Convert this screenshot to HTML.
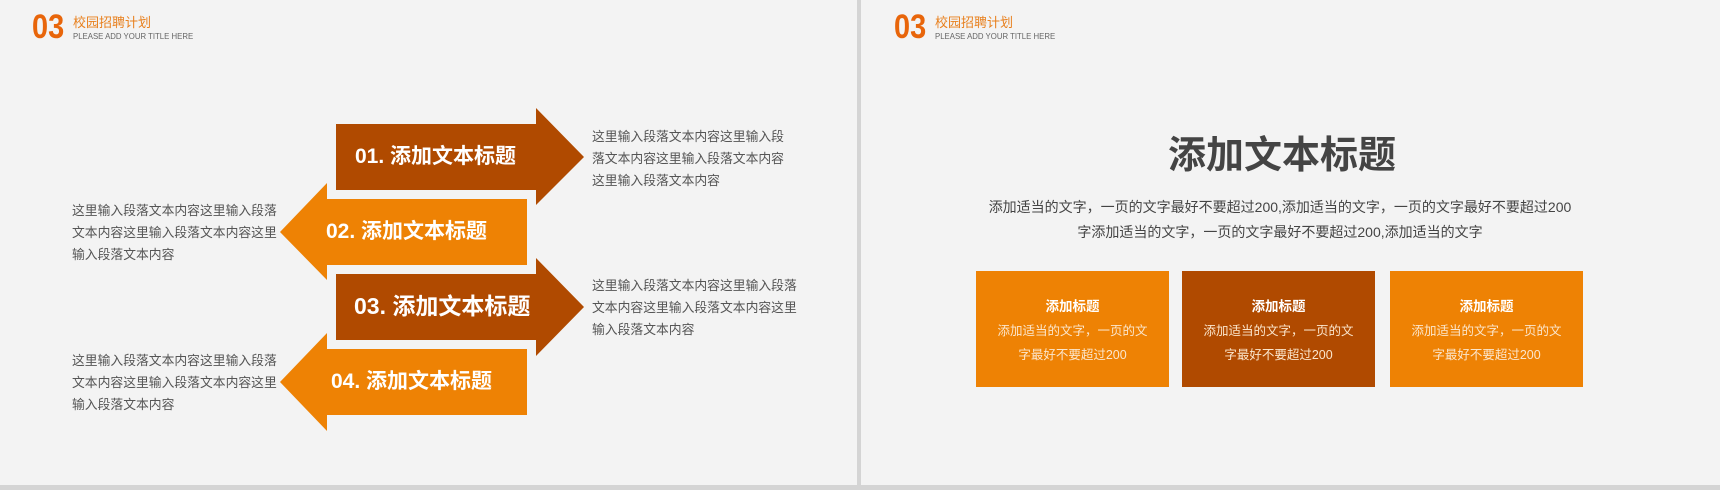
<!DOCTYPE html>
<html><head><meta charset="utf-8"><style>
*{margin:0;padding:0}
body{width:1720px;height:490px;background:#f3f3f3;position:relative;overflow:hidden;font-family:"Liberation Sans","Noto Sans CJK SC",sans-serif}
.a{position:absolute;white-space:nowrap}
.num{font-family:"Liberation Sans Narrow","Liberation Sans",sans-serif;font-weight:bold;color:#e8650a;font-size:34px;line-height:26px;transform:scaleX(0.85);transform-origin:left top}
.tt{color:#e8801e;font-size:13px;line-height:14px}
.st{color:#666;font-size:7.8px;line-height:8px}
.p{color:#555;font-size:12.8px;line-height:22px}
.at{color:#fff;font-weight:bold;font-size:21px;line-height:24px}
.box{position:absolute;top:271px;width:193px;height:116px;text-align:center;color:#fbe6cc;font-size:12.5px;line-height:24px}
.box b{display:block;color:#fff;font-size:13.5px;margin-top:24px}
</style></head><body>
<div class="a num" style="left:32px;top:14px">03</div>
<div class="a tt" style="left:73px;top:16px">校园招聘计划</div>
<div class="a st" style="left:73px;top:33px">PLEASE ADD YOUR TITLE HERE</div>
<div class="a num" style="left:894px;top:14px">03</div>
<div class="a tt" style="left:935px;top:16px">校园招聘计划</div>
<div class="a st" style="left:935px;top:33px">PLEASE ADD YOUR TITLE HERE</div>
<div class="a" style="left:857px;top:0;width:4px;height:490px;background:#d4d4d4"></div>
<div class="a" style="left:0;top:485px;width:1720px;height:5px;background:#d4d4d4"></div>
<svg class="a" style="left:0;top:0" width="860" height="490">
<polygon points="336,124 536,124 536,108 584,157 536,205 536,190 336,190" fill="#b04a00"/>
<polygon points="527,199 327,199 327,183 280,232 327,280 327,265 527,265" fill="#ee8204"/>
<polygon points="336,274 536,274 536,258 584,307 536,356 536,340 336,340" fill="#b04a00"/>
<polygon points="527,349 327,349 327,333 280,382 327,431 327,415 527,415" fill="#ee8204"/>
</svg>
<div class="a at" style="left:355px;top:145px">01. 添加文本标题</div>
<div class="a at" style="left:326px;top:220px">02. 添加文本标题</div>
<div class="a at" style="left:354px;top:294px;font-size:23px">03. 添加文本标题</div>
<div class="a at" style="left:331px;top:370px">04. 添加文本标题</div>
<div class="a p" style="left:592px;top:126px">这里输入段落文本内容这里输入段<br>落文本内容这里输入段落文本内容<br>这里输入段落文本内容</div>
<div class="a p" style="left:72px;top:200px">这里输入段落文本内容这里输入段落<br>文本内容这里输入段落文本内容这里<br>输入段落文本内容</div>
<div class="a p" style="left:592px;top:275px">这里输入段落文本内容这里输入段落<br>文本内容这里输入段落文本内容这里<br>输入段落文本内容</div>
<div class="a p" style="left:72px;top:350px">这里输入段落文本内容这里输入段落<br>文本内容这里输入段落文本内容这里<br>输入段落文本内容</div>
<div class="a" style="left:1082px;top:133px;width:400px;text-align:center;color:#444;font-weight:bold;font-size:38px;line-height:46px">添加文本标题</div>
<div class="a" style="left:930px;top:195px;width:700px;text-align:center;color:#444;font-size:14px;line-height:25px">添加适当的文字，一页的文字最好不要超过200,添加适当的文字，一页的文字最好不要超过200<br>字添加适当的文字，一页的文字最好不要超过200,添加适当的文字</div>
<div class="box" style="left:976px;background:#ee8204"><b>添加标题</b>添加适当的文字，一页的文<br>字最好不要超过200</div>
<div class="box" style="left:1182px;background:#b04a00"><b>添加标题</b>添加适当的文字，一页的文<br>字最好不要超过200</div>
<div class="box" style="left:1390px;background:#ee8204"><b>添加标题</b>添加适当的文字，一页的文<br>字最好不要超过200</div>
</body></html>
